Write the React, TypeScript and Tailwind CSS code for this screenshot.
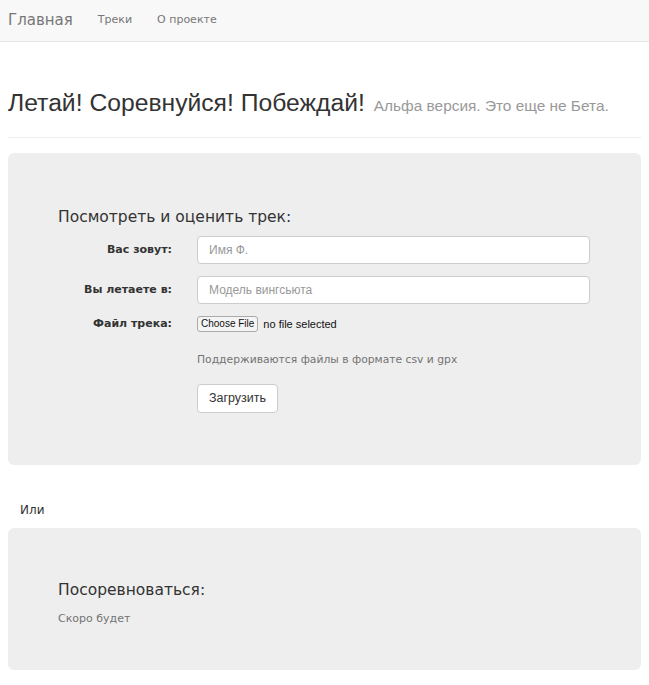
import React from "react";

const V = { fontFamily: '"DejaVu Sans", Verdana, sans-serif' };
const H = { fontFamily: '"Liberation Sans", Arial, sans-serif' };

export default function App() {
  return (
    <div className="min-h-[685px] bg-white text-[#333]" style={V}>
      <nav className="h-[42px] bg-[#f8f8f8] border-b border-[#e7e7e7] flex items-center px-2">
        <span className="text-[15px] text-[#777] mr-[25px]">Главная</span>
        <span className="text-[11px] text-[#777] mr-[25px]">Треки</span>
        <span className="text-[11px] text-[#777]">О проекте</span>
      </nav>
      <div className="px-2">
        <div className="pt-[49px] pb-[20px] border-b border-[#eee] flex items-baseline">
          <h1 className="text-[24.7px] text-[#333] leading-none" style={H}>
            Летай! Соревнуйся! Побеждай!
          </h1>
          <span className="ml-[9px] text-[15.4px] text-[#999]" style={H}>
            Альфа версия. Это еще не Бета.
          </span>
        </div>
        <div className="mt-[15px] bg-[#eee] rounded-[6px] h-[312px] pl-[50px] pt-[54px]">
          <h2 className="text-[15.5px] text-[#333] leading-[20px]">Посмотреть и оценить трек:</h2>
          <div className="mt-[9px] flex items-center">
            <label className="w-[114px] text-right text-[11px] font-bold">Вас зовут:</label>
            <div className="ml-[25px] w-[393px] h-[28px] bg-white border border-[#ccc] rounded-[4px] flex items-center px-[11px] text-[12px] text-[#999]" style={H}>
              Имя Ф.
            </div>
          </div>
          <div className="mt-[12px] flex items-center">
            <label className="w-[114px] text-right text-[11px] font-bold">Вы летаете в:</label>
            <div className="ml-[25px] w-[393px] h-[28px] bg-white border border-[#ccc] rounded-[4px] flex items-center px-[11px] text-[12px] text-[#999]" style={H}>
              Модель вингсьюта
            </div>
          </div>
          <div className="mt-[12px] flex items-center">
            <label className="w-[114px] text-right text-[11px] font-bold">Файл трека:</label>
            <div className="ml-[25px] flex items-center" style={H}>
              <span className="h-[16px] px-[3px] bg-[#f4f4f4] border border-[#aaa] rounded-[3px] text-[10px] leading-[14px] text-[#111]">Choose File</span>
              <span className="ml-[5px] text-[11px] text-[#111]">no file selected</span>
            </div>
          </div>
          <p className="ml-[139px] mt-[19px] text-[10.75px] text-[#737373]">Поддерживаются файлы в формате csv и gpx</p>
          <button className="ml-[139px] mt-[16px] h-[29px] px-[11px] bg-white border border-[#ccc] rounded-[4px] text-[12.5px] text-[#333]" style={H}>
            Загрузить
          </button>
        </div>
        <p className="mt-[36px] ml-[12px] text-[12px] text-[#333]">Или</p>
        <div className="mt-[9px] bg-[#eee] rounded-[6px] h-[142px] pl-[50px] pt-[52px]">
          <h2 className="text-[15.5px] text-[#333] leading-[20px]">Посоревноваться:</h2>
          <p className="mt-[11px] text-[11px] text-[#737373]">Скоро будет</p>
        </div>
      </div>
    </div>
  );
}
